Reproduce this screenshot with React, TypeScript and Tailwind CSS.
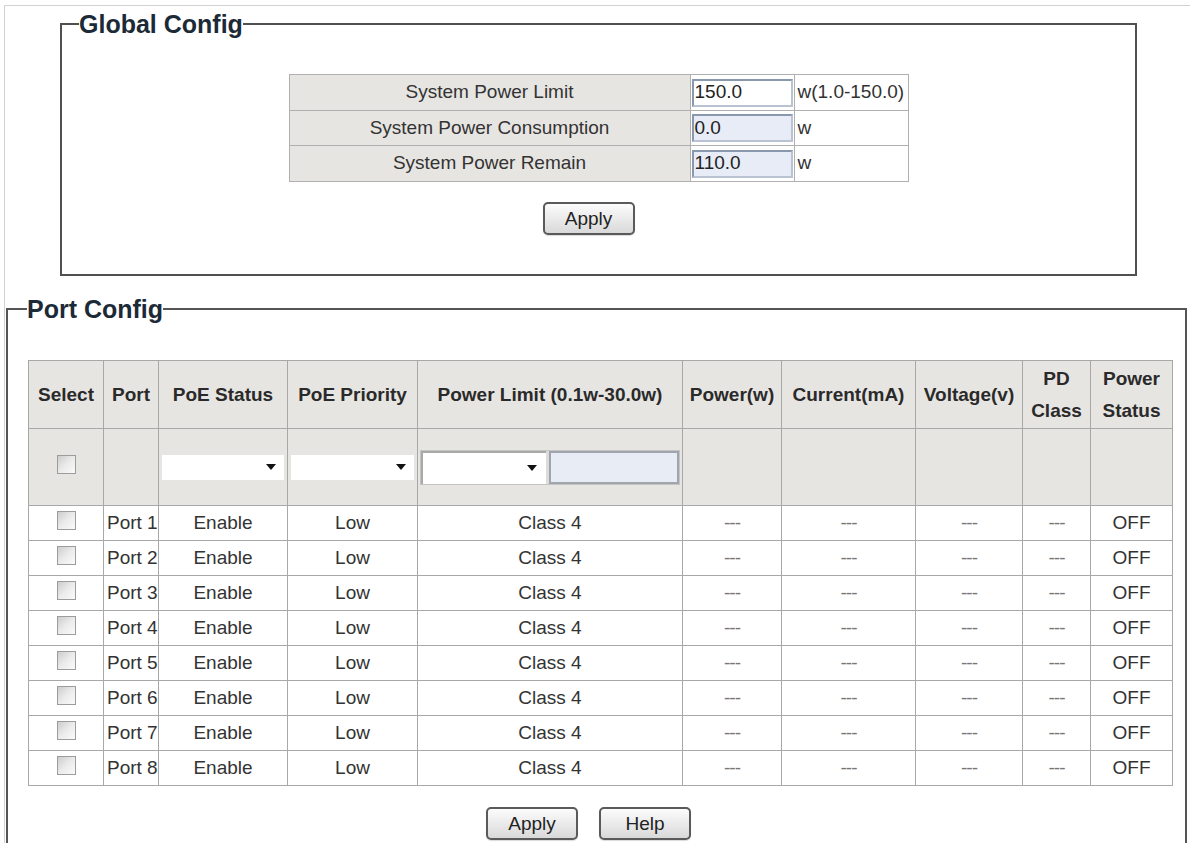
import React from 'react';

const ports = ['Port 1', 'Port 2', 'Port 3', 'Port 4', 'Port 5', 'Port 6', 'Port 7', 'Port 8'];

function Checkbox() {
  return (
    <span className="inline-block w-[19px] h-[19px] border border-[#9c9c9c] bg-linear-to-br from-[#cdcdcd] via-[#ebebeb] to-[#fafafa] align-middle" />
  );
}

function Arrow() {
  return <span className="block w-0 h-0 border-x-[5px] border-t-[6px] border-x-transparent border-t-[#111]" />;
}

function Btn({ children }: { children: React.ReactNode }) {
  return (
    <button className="w-[92px] h-[33px] rounded-[5px] border-2 border-[#5a5a5a] bg-linear-to-b from-[#fcfcfc] to-[#d9d9d9] text-[19px] leading-none text-[#222] shadow-[0_1px_1px_rgba(0,0,0,0.15)]">
      {children}
    </button>
  );
}

function Dash() {
  return <span className="text-[#777] tracking-[-1px]">---</span>;
}

const th = 'border border-[#a8a8a8] bg-[#e7e5e2] font-bold text-center leading-[32px] text-[#2a2a2a] p-0';
const fl = 'border border-[#a8a8a8] bg-[#e7e5e2] p-0';
const td = 'border border-[#a8a8a8] h-[35px] p-0 text-center';

export default function App() {
  return (
    <div className="min-h-screen bg-white pl-[4px] pt-[5px] font-['Liberation_Sans',Arial,sans-serif] text-[#333]">
      <div className="border-l border-t border-[#d2d2d2] min-h-[838px]">
        {/* Global Config */}
        <fieldset className="ml-[55px] mt-[4px] w-[1077px] border-2 border-[#505050]">
          <legend className="ml-[17px] text-[25px] leading-[28px] font-bold text-[#1c2a37]">Global Config</legend>
          <table className="mx-auto mt-[36px] w-[619px] table-fixed border-collapse text-[19px]">
            <colgroup>
              <col className="w-[401px]" />
              <col className="w-[104px]" />
              <col className="w-[114px]" />
            </colgroup>
            <tbody>
              {[
                { label: 'System Power Limit', value: '150.0', unit: 'w(1.0-150.0)', ro: false, h: 'h-[36px]' },
                { label: 'System Power Consumption', value: '0.0', unit: 'w', ro: true, h: 'h-[35px]' },
                { label: 'System Power Remain', value: '110.0', unit: 'w', ro: true, h: 'h-[36px]' },
              ].map((r) => (
                <tr key={r.label} className={r.h}>
                  <td className="border border-[#b0b0b0] bg-[#e7e5e2] text-center p-0">{r.label}</td>
                  <td className="border border-[#b0b0b0] p-0">
                    <div
                      className={`mx-px h-[28px] border-2 border-[#8a98ad] border-b-[#b9c3d2] border-r-[#b9c3d2] pl-[1px] flex items-center text-[#222] ${
                        r.ro ? 'bg-[#e8ecf6]' : 'bg-white'
                      }`}
                    >
                      {r.value}
                    </div>
                  </td>
                  <td className="border border-[#b0b0b0] pl-[3px] whitespace-nowrap">{r.unit}</td>
                </tr>
              ))}
            </tbody>
          </table>
          <div className="mt-[20px] pb-[39px] pr-[20px] flex justify-center">
            <Btn>Apply</Btn>
          </div>
        </fieldset>

        {/* Port Config */}
        <fieldset className="ml-[1px] mt-[19px] w-[1181px] border-2 border-[#555]">
          <legend className="ml-[19px] text-[25px] leading-[28px] font-bold text-[#1c2a37]">Port Config</legend>
          <table className="ml-[20px] mt-[37px] w-[1144px] table-fixed border-collapse text-[19px]">
            <colgroup>
              <col className="w-[75px]" />
              <col className="w-[55px]" />
              <col className="w-[129px]" />
              <col className="w-[130px]" />
              <col className="w-[265px]" />
              <col className="w-[99px]" />
              <col className="w-[134px]" />
              <col className="w-[107px]" />
              <col className="w-[68px]" />
              <col className="w-[82px]" />
            </colgroup>
            <thead>
              <tr className="h-[68px]">
                <th className={th}>Select</th>
                <th className={th}>Port</th>
                <th className={th}>PoE Status</th>
                <th className={th}>PoE Priority</th>
                <th className={th}>Power Limit (0.1w-30.0w)</th>
                <th className={th}>Power(w)</th>
                <th className={th}>Current(mA)</th>
                <th className={th}>Voltage(v)</th>
                <th className={th}>
                  PD
                  <br />
                  Class
                </th>
                <th className={th}>
                  Power
                  <br />
                  Status
                </th>
              </tr>
            </thead>
            <tbody>
              <tr className="h-[77px]">
                <td className={`${fl} text-center`}>
                  <div className="pb-[6px]">
                    <Checkbox />
                  </div>
                </td>
                <td className={fl} />
                <td className={fl}>
                  <div className="mx-[3px] h-[25px] bg-white flex items-center justify-end pr-[8px]">
                    <Arrow />
                  </div>
                </td>
                <td className={fl}>
                  <div className="mx-[3px] h-[25px] bg-white flex items-center justify-end pr-[8px]">
                    <Arrow />
                  </div>
                </td>
                <td className={fl}>
                  <div className="mx-[2px] h-[35px] flex gap-[3px] border border-[#c4c4c4] bg-[#dedcd9]">
                    <div className="w-[125px] bg-white border-t-2 border-l-2 border-[#a9a9a9] flex items-center justify-end pr-[9px]">
                      <Arrow />
                    </div>
                    <div className="flex-1 bg-[#e8ecf5] border-2 border-[#9fa4ad]" />
                  </div>
                </td>
                <td className={fl} />
                <td className={fl} />
                <td className={fl} />
                <td className={fl} />
                <td className={fl} />
              </tr>
              {ports.map((p) => (
                <tr key={p} className="h-[35px]">
                  <td className={td}>
                    <div className="pb-[7px] leading-none">
                      <Checkbox />
                    </div>
                  </td>
                  <td className={`${td} !text-left pl-[3px] whitespace-nowrap`}>{p}</td>
                  <td className={td}>Enable</td>
                  <td className={td}>Low</td>
                  <td className={td}>Class 4</td>
                  <td className={td}>
                    <Dash />
                  </td>
                  <td className={td}>
                    <Dash />
                  </td>
                  <td className={td}>
                    <Dash />
                  </td>
                  <td className={td}>
                    <Dash />
                  </td>
                  <td className={td}>OFF</td>
                </tr>
              ))}
            </tbody>
          </table>
          <div className="ml-[20px] w-[1144px] mt-[21px] pb-[20px] pr-[23px] flex justify-center gap-[21px]">
            <Btn>Apply</Btn>
            <Btn>Help</Btn>
          </div>
        </fieldset>
      </div>
    </div>
  );
}
